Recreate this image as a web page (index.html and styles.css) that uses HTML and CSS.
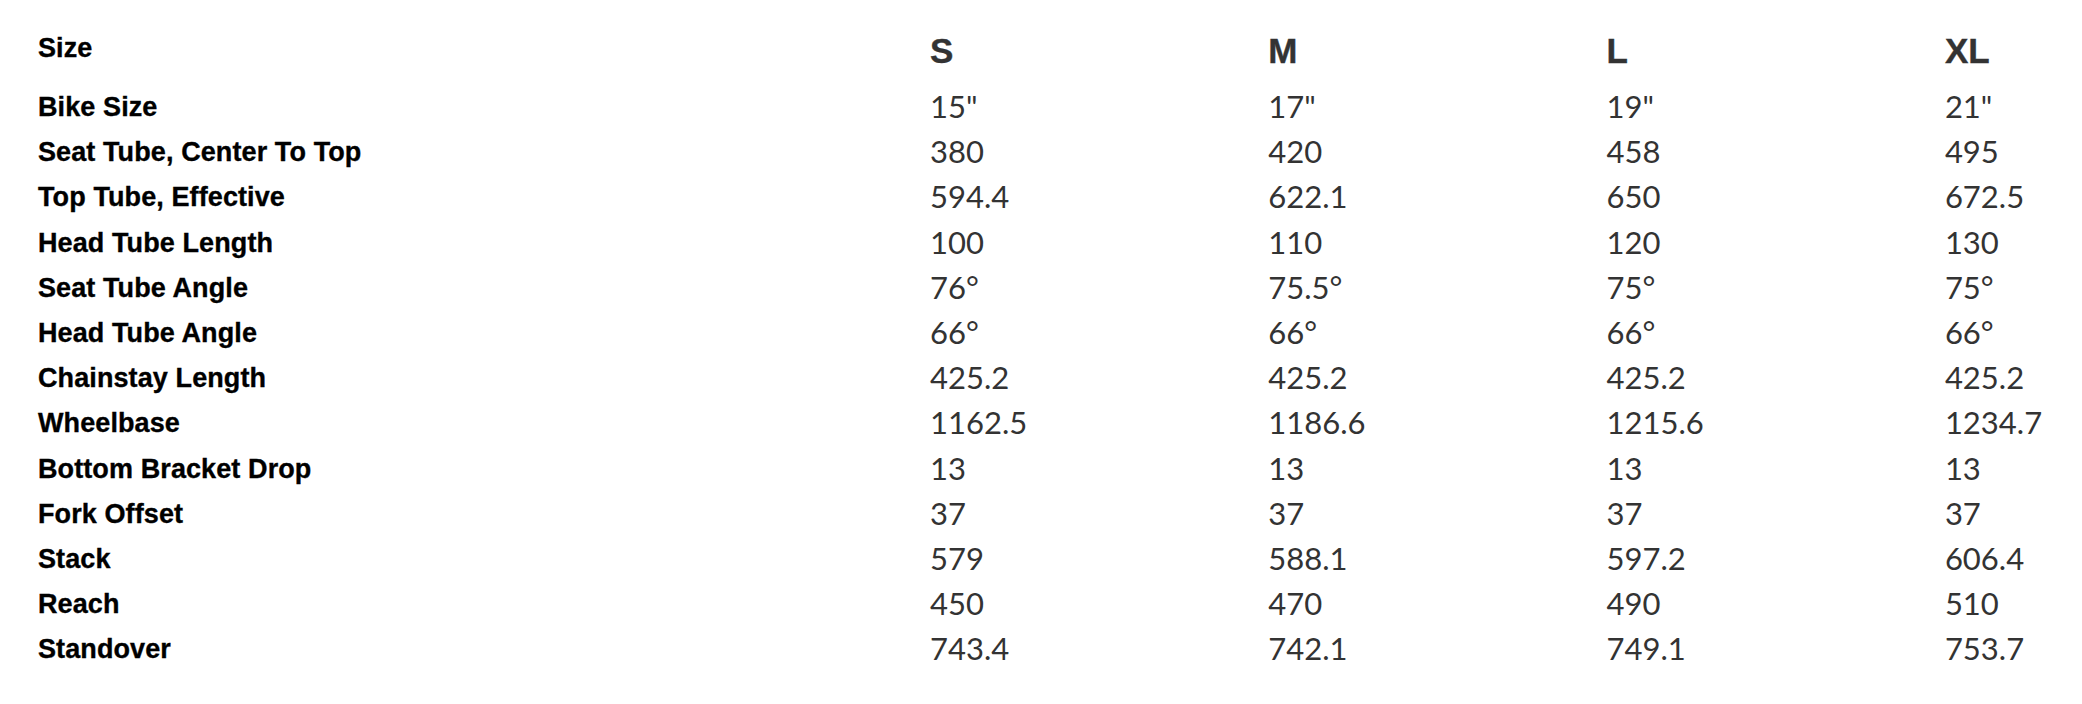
FILE: index.html
```html
<!DOCTYPE html>
<html lang="en">
<head>
<meta charset="utf-8">
<title>Geometry</title>
<link rel="stylesheet" href="styles.css">
</head>
<body>
<div class="geo">
  <div class="row head"><div class="label">Size</div><div class="size">S</div><div class="size">M</div><div class="size">L</div><div class="size">XL</div></div>
  <div class="row"><div class="label">Bike Size</div><div class="val">15"</div><div class="val">17"</div><div class="val">19"</div><div class="val">21"</div></div>
  <div class="row"><div class="label">Seat Tube, Center To Top</div><div class="val">380</div><div class="val">420</div><div class="val">458</div><div class="val">495</div></div>
  <div class="row"><div class="label">Top Tube, Effective</div><div class="val">594.4</div><div class="val">622.1</div><div class="val">650</div><div class="val">672.5</div></div>
  <div class="row"><div class="label">Head Tube Length</div><div class="val">100</div><div class="val">110</div><div class="val">120</div><div class="val">130</div></div>
  <div class="row"><div class="label">Seat Tube Angle</div><div class="val">76°</div><div class="val">75.5°</div><div class="val">75°</div><div class="val">75°</div></div>
  <div class="row"><div class="label">Head Tube Angle</div><div class="val">66°</div><div class="val">66°</div><div class="val">66°</div><div class="val">66°</div></div>
  <div class="row"><div class="label">Chainstay Length</div><div class="val">425.2</div><div class="val">425.2</div><div class="val">425.2</div><div class="val">425.2</div></div>
  <div class="row"><div class="label">Wheelbase</div><div class="val">1162.5</div><div class="val">1186.6</div><div class="val">1215.6</div><div class="val">1234.7</div></div>
  <div class="row"><div class="label">Bottom Bracket Drop</div><div class="val">13</div><div class="val">13</div><div class="val">13</div><div class="val">13</div></div>
  <div class="row"><div class="label">Fork Offset</div><div class="val">37</div><div class="val">37</div><div class="val">37</div><div class="val">37</div></div>
  <div class="row"><div class="label">Stack</div><div class="val">579</div><div class="val">588.1</div><div class="val">597.2</div><div class="val">606.4</div></div>
  <div class="row"><div class="label">Reach</div><div class="val">450</div><div class="val">470</div><div class="val">490</div><div class="val">510</div></div>
  <div class="row"><div class="label">Standover</div><div class="val">743.4</div><div class="val">742.1</div><div class="val">749.1</div><div class="val">753.7</div></div>
</div>
</body>
</html>
```

FILE: styles.css
```css
html, body {
  margin: 0;
  padding: 0;
  background: #ffffff;
}

.geo {
  display: flex;
  flex-direction: column;
  padding: 25px 0 0 38px;
}

.row {
  display: grid;
  grid-template-columns: 892px 338.3px 338.3px 338.3px 1fr;
  align-items: start;
  height: 45.2px;
}

.row.head {
  height: 59px;
}

.label {
  font-family: "Liberation Sans", Arial, sans-serif;
  font-weight: 700;
  font-size: 27px;
  line-height: 45.2px;
  padding-top: 1px;
  letter-spacing: 0.1px;
  color: #000;
  white-space: nowrap;
  -webkit-text-stroke: 0.35px #000;
}

.size {
  font-family: "Liberation Sans", Arial, sans-serif;
  font-weight: 700;
  font-size: 35px;
  line-height: 51.7px;
  color: #333;
  -webkit-text-stroke: 0.4px #333;
}

.val {
  font-family: Lato, "Liberation Sans", sans-serif;
  font-weight: 400;
  font-size: 31px;
  line-height: 45.2px;
  color: #333;
  white-space: nowrap;
}
```
